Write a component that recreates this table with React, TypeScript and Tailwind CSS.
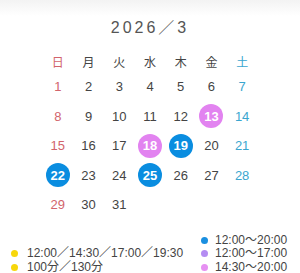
import React from "react";

const font = { fontFamily: '"Liberation Sans", "Noto Sans CJK JP", sans-serif' };

type Day = { n: number; c?: "pink" | "blue" };

export default function App() {
  const weeks: (Day | null)[][] = [
    [{ n: 1 }, { n: 2 }, { n: 3 }, { n: 4 }, { n: 5 }, { n: 6 }, { n: 7 }],
    [{ n: 8 }, { n: 9 }, { n: 10 }, { n: 11 }, { n: 12 }, { n: 13, c: "pink" }, { n: 14 }],
    [{ n: 15 }, { n: 16 }, { n: 17 }, { n: 18, c: "pink" }, { n: 19, c: "blue" }, { n: 20 }, { n: 21 }],
    [{ n: 22, c: "blue" }, { n: 23 }, { n: 24 }, { n: 25, c: "blue" }, { n: 26 }, { n: 27 }, { n: 28 }],
    [{ n: 29 }, { n: 30 }, { n: 31 }, null, null, null, null],
  ];
  const heads = ["日", "月", "火", "水", "木", "金", "土"];
  const colColor = (i: number) =>
    i === 0 ? "text-[#d2646c]" : i === 6 ? "text-[#3aa6cf]" : "text-[#444]";

  return (
    <div className="w-[300px] h-[273px] bg-white relative overflow-hidden" style={font}>
      <div className="absolute top-0 left-0 w-full h-[16px] bg-gradient-to-b from-[#f3f3f3] to-white" />
      <div className="relative pt-[17px]">
        <div className="text-center text-[16px] leading-[22px] tracking-[3px] text-[#555] font-light">
          2026／3
        </div>
        <div className="w-[215px] mx-auto mt-[13px] grid grid-cols-7">
          {heads.map((h, i) => (
            <div key={h} className={`h-[22px] flex items-center justify-center text-[12px] ${colColor(i)}`}>
              {h}
            </div>
          ))}
        </div>
        <div className="w-[215px] mx-auto -mt-[2px] grid grid-cols-7">
          {weeks.flat().map((d, idx) => {
            const i = idx % 7;
            return (
              <div key={idx} className="h-[29.5px] flex items-center justify-center">
                {d &&
                  (d.c ? (
                    <div
                      className={`w-[24px] h-[24px] rounded-full flex items-center justify-center text-white text-[13px] font-bold ${
                        d.c === "pink" ? "bg-[#e283f0]" : "bg-[#0a8de0]"
                      }`}
                    >
                      {d.n}
                    </div>
                  ) : (
                    <span className={`text-[13px] ${colColor(i)}`}>{d.n}</span>
                  ))}
              </div>
            );
          })}
        </div>
        <div className="flex items-end mt-[14px] text-[12px] leading-[13.5px] text-[#444]">
          <div className="pl-[11px] w-[200px]">
            <div className="flex items-center gap-[9px]">
              <span className="w-[7px] h-[7px] rounded-full bg-[#f7d70c]" />
              12:00／14:30／17:00／19:30
            </div>
            <div className="flex items-center gap-[9px]">
              <span className="w-[7px] h-[7px] rounded-full bg-[#f7d70c]" />
              100分／130分
            </div>
          </div>
          <div className="pl-[1px]">
            <div className="flex items-center gap-[7px]">
              <span className="w-[7px] h-[7px] rounded-full bg-[#1a8fe0]" />
              12:00〜20:00
            </div>
            <div className="flex items-center gap-[7px]">
              <span className="w-[7px] h-[7px] rounded-full bg-[#b48cf2]" />
              12:00〜17:00
            </div>
            <div className="flex items-center gap-[7px]">
              <span className="w-[7px] h-[7px] rounded-full bg-[#e690f2]" />
              14:30〜20:00
            </div>
          </div>
        </div>
      </div>
    </div>
  );
}
